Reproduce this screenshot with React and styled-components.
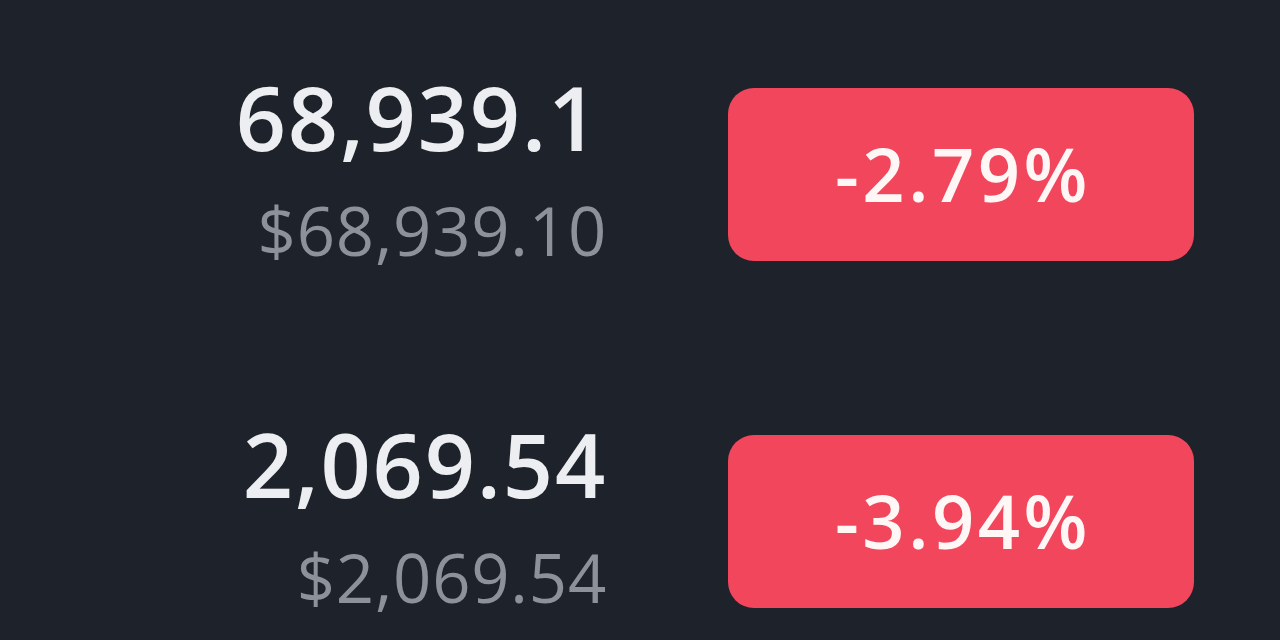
import React from "react";
import styled, { createGlobalStyle } from "styled-components";

const Global = createGlobalStyle`
  html, body { margin: 0; padding: 0; background: #1e222b; }
  body { font-family: "Open Sans", Lato, sans-serif; }
`;

const Page = styled.div`
  width: 1280px;
  height: 640px;
  overflow: hidden;
  background: #1e222b;
  display: flex;
  flex-direction: column;
  gap: 174px;
  padding-top: 88px;
  box-sizing: border-box;
`;

const Row = styled.div`
  display: flex;
  align-items: flex-start;
`;

const PriceCol = styled.div`
  width: 607px;
  height: 173px;
  display: flex;
  flex-direction: column;
  align-items: flex-end;
`;

const Price = styled.div`
  font-size: 88px;
  font-weight: 600;
  line-height: 1;
  letter-spacing: 1.8px;
  color: #eceef2;
  margin-top: -15px;
  margin-right: ${(p) => p.$shift || 0}px;
`;

const Fiat = styled.div`
  font-size: 67px;
  font-weight: 400;
  line-height: 1;
  letter-spacing: 0.8px;
  color: #8c919a;
  margin-top: 36px;
`;

const Badge = styled.div`
  margin-left: 121px;
  width: 466px;
  height: 173px;
  border-radius: 26px;
  background: #f2465c;
  color: #fff6f6;
  display: flex;
  align-items: center;
  justify-content: center;
  font-size: 74px;
  font-weight: 600;
  letter-spacing: 3.5px;
  padding-bottom: 2px;
  padding-left: 4px;
  box-sizing: border-box;
`;

const rows = [
  { price: "68,939.1", fiat: "$68,939.10", change: "-2.79%", shift: 7 },
  { price: "2,069.54", fiat: "$2,069.54", change: "-3.94%", shift: 0 },
];

export default function App() {
  return (
    <>
      <Global />
      <Page>
        {rows.map((r) => (
          <Row key={r.price}>
            <PriceCol>
              <Price $shift={r.shift}>{r.price}</Price>
              <Fiat>{r.fiat}</Fiat>
            </PriceCol>
            <Badge>{r.change}</Badge>
          </Row>
        ))}
      </Page>
    </>
  );
}
